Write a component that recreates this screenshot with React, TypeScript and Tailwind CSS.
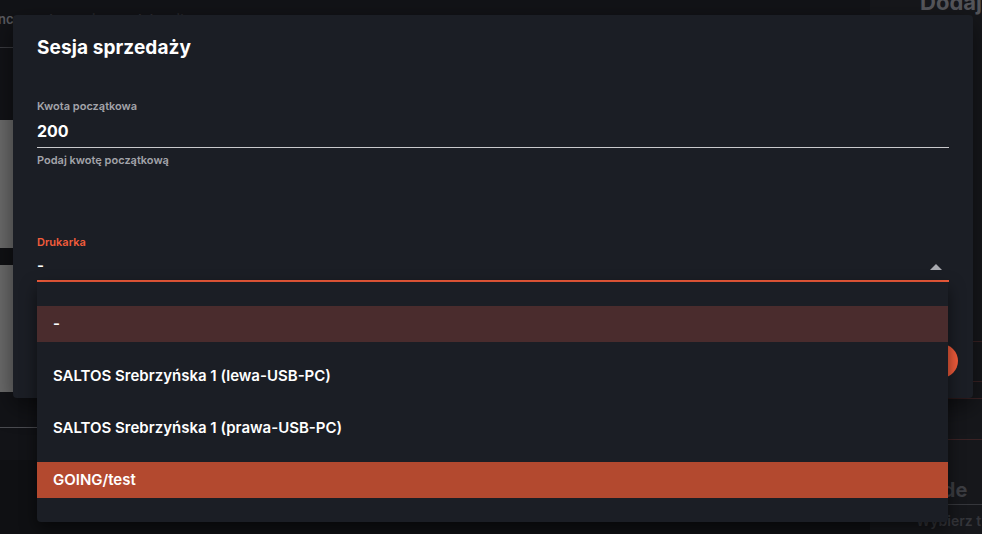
import { useState } from "react";

const printers = [
  "-",
  "SALTOS Srebrzyńska 1 (lewa-USB-PC)",
  "SALTOS Srebrzyńska 1 (prawa-USB-PC)",
  "GOING/test",
];

const App = () => {
  const [amount, setAmount] = useState("200");
  const [printer] = useState("-");
  const hovered = "-";
  const selected = "GOING/test";

  return (
    <div
      className="relative h-[534px] w-[982px] overflow-hidden bg-[#121317] text-white"
      style={{ fontFamily: "Inter, 'Noto Sans', sans-serif" }}
    >
      {/* page behind the dialog */}
      <div className="flex h-full">
        <div className="flex flex-1 flex-col">
          <div className="flex h-12 items-start border-b border-[#3a3b40] pt-[10px] text-[13px] font-semibold text-[#5a5b60]">
            <span className="-ml-[2px]">nce</span>
            <span className="ml-7 text-[#2a2b30]">Lorem ipsum dolor sit</span>
          </div>
          <div className="mt-[72px] h-[128px] w-[60px] bg-[#6b6b6b]" />
          <div className="h-[17px] w-[60px] bg-[#101114]" />
          <div className="h-[127px] w-[60px] bg-[#6b6b6b]" />
          <div className="mt-[35px] w-[60px] border-b border-[#4a4b50]" />
          <div className="mt-[32px] flex-1 bg-[#0f1013]" />
        </div>
        <div className="flex w-[112px] flex-col bg-[#16171b] pl-[80px]">
          <div className="-mt-[14px] -ml-[30px] text-[22px] font-bold text-[#55565b]">Dodaj</div>
          <div className="mt-[322px] border-t border-[#3a2224]" />
          <div className="mt-[39px] border-t border-[#3a2224]" />
          <div className="mt-[16px] -ml-[32px] border-t border-[#3a2224]" />
          <div className="mt-[40px] -ml-[32px] border-t border-[#3a2224]" />
          <div className="-ml-[32px] mt-[38px] text-[20px] font-bold leading-[24px] text-[#3c3d42]">dode</div>
          <div className="-ml-[32px] mt-[2px] border-t border-[#35363b]" />
          <div className="-ml-[34px] mt-[5px] whitespace-nowrap text-[14px] font-semibold text-[#34353a]">Wybierz typ</div>
        </div>
      </div>

      {/* dialog */}
      <div className="absolute left-[13px] top-[15px] flex h-[383px] w-[960px] flex-col rounded-[4px] bg-[#1b1e25] px-6 shadow-[0_8px_24px_rgba(0,0,0,0.5)]">
        <h2 className="mt-[19px] text-[19px] font-bold leading-[28px] tracking-[0.1px]">Sesja sprzedaży</h2>

        <div className="mt-[36px] flex flex-col">
          <label className="text-[11px] font-semibold leading-[16px] text-[#a3a4aa]">Kwota początkowa</label>
          <input
            className="mt-[4px] h-[30px] border-b border-[#c9c9cc] bg-transparent pb-[3px] text-[16px] font-bold text-white outline-none"
            value={amount}
            onChange={(e) => setAmount(e.target.value)}
          />
          <span className="mt-[4px] text-[11px] font-semibold leading-[16px] text-[#a3a4aa]">Podaj kwotę początkową</span>
        </div>

        <div className="mt-[66px] flex flex-col">
          <label className="text-[11px] font-semibold leading-[16px] text-[#f25c3b]">Drukarka</label>
          <div className="mt-[6px] flex h-[26px] items-center justify-between border-b-2 border-[#f25c3b] pb-[3px]">
            <span className="text-[15px] font-semibold">{printer}</span>
            <svg width="12" height="6" viewBox="0 0 12 6" className="mr-[7px]">
              <path d="M0 6 L6 0 L12 6 Z" fill="#a9aab0" />
            </svg>
          </div>
        </div>

        <div className="mt-auto mb-[20px] flex justify-end">
          <div className="mr-[-9px] h-[34px] w-[34px] rounded-full bg-[#f25c3b]" />
        </div>
      </div>

      {/* open select menu */}
      <ul className="absolute left-[37px] top-[282px] flex w-[911px] flex-col gap-4 rounded-b-[4px] bg-[#1b1e25] py-6 shadow-[0_6px_16px_rgba(0,0,0,0.55)]">
        {printers.map((p) => (
          <li
            key={p}
            className={
              "flex h-9 items-center px-4 text-[15px] font-semibold " +
              (p === selected ? "bg-[#b3492f]" : p === hovered ? "bg-[#4a2c2d]" : "")
            }
          >
            {p}
          </li>
        ))}
      </ul>
    </div>
  );
};

export default App;
